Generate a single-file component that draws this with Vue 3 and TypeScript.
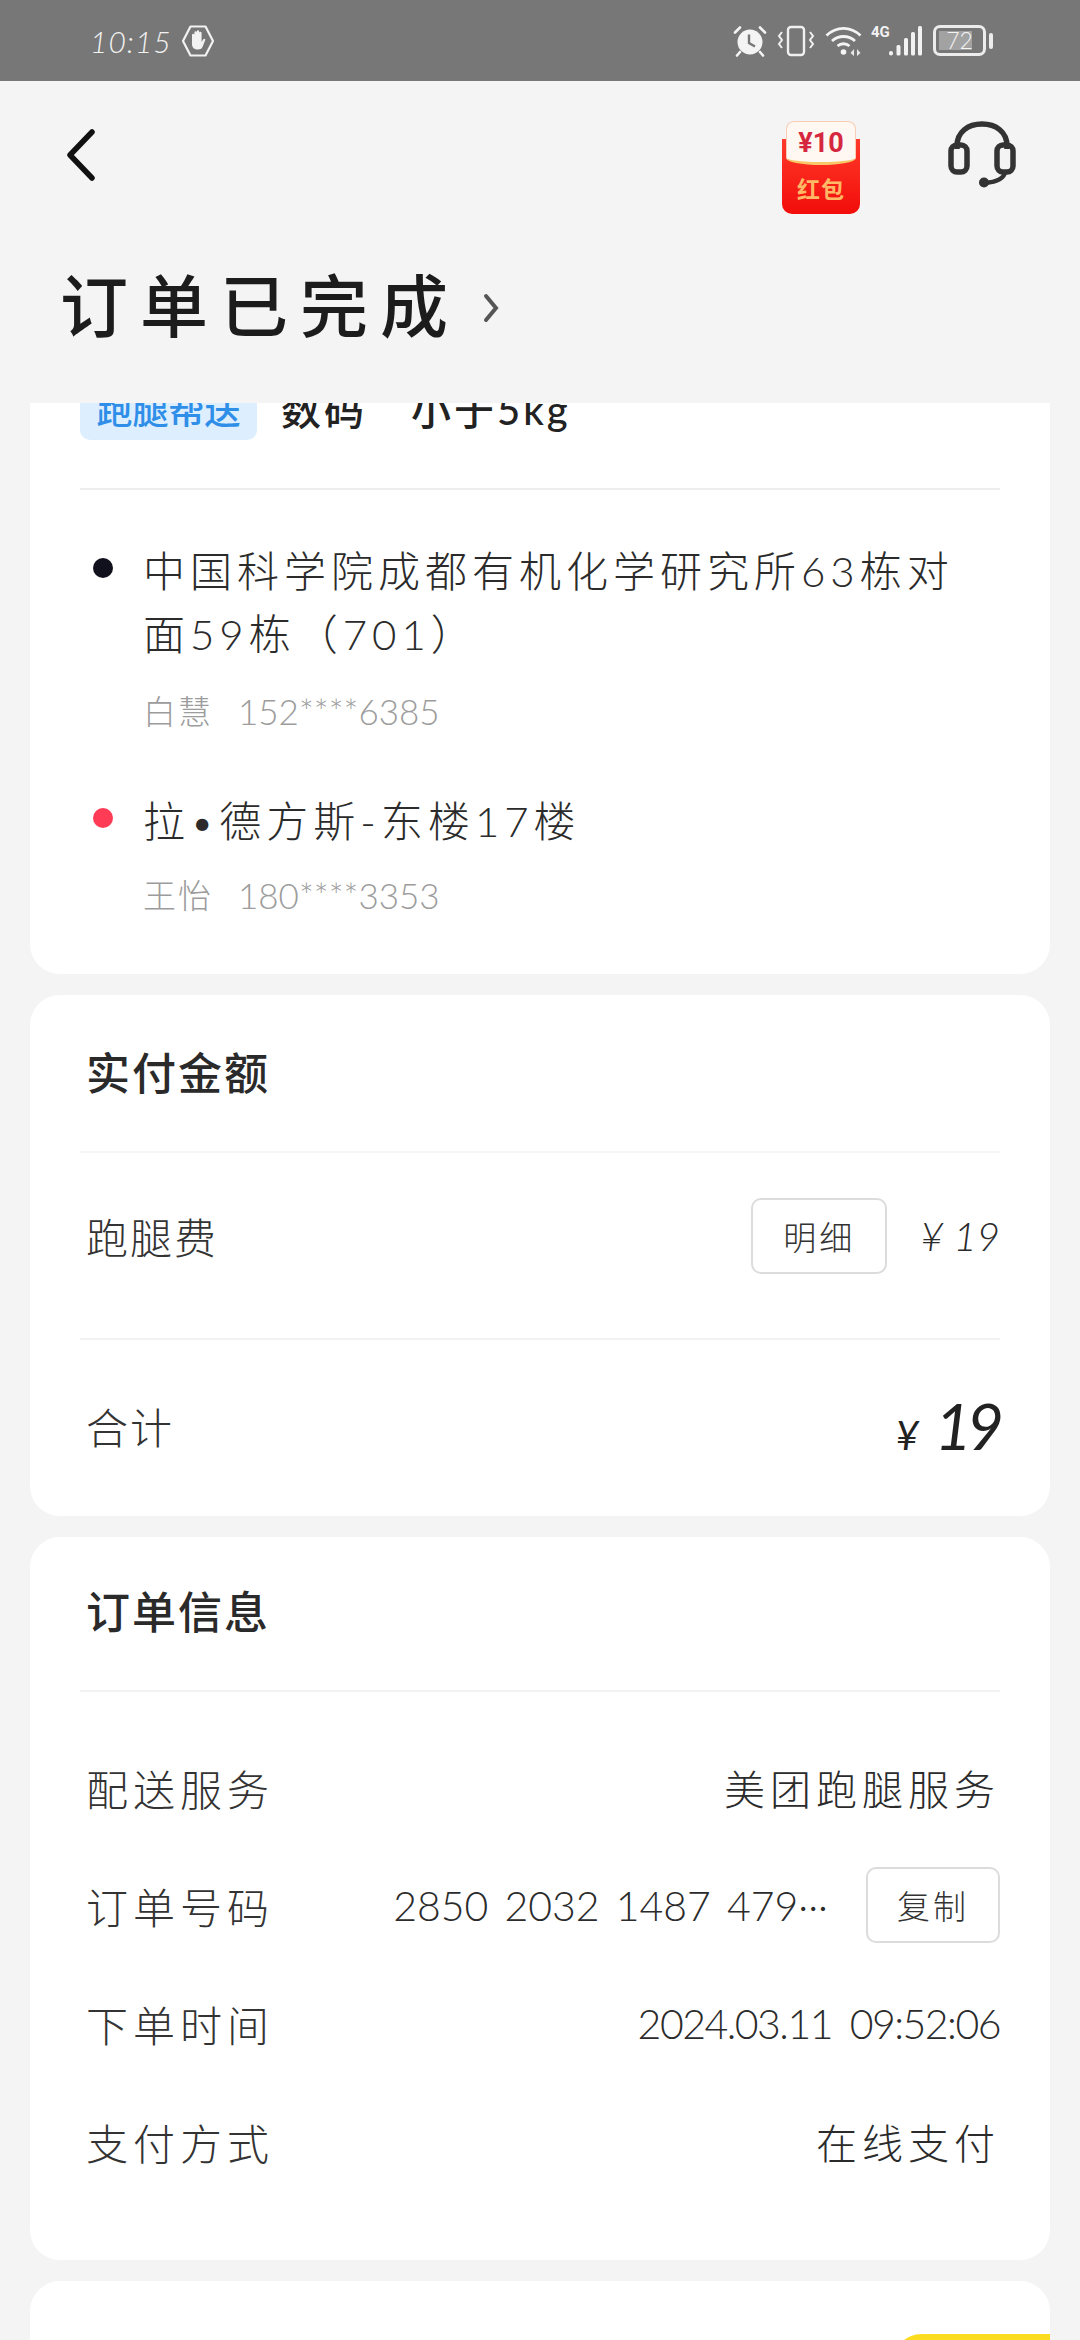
<template>
  <div class="page">
    <div class="status-bar">
      <div class="status-left">
        <span class="clock">10:15</span>
        <svg class="hand" width="34" height="34" viewBox="0 0 34 34">
          <path d="M9.500 2.500h15L32 17l-7.500 14.500h-15L2 17z" fill="none" stroke="#f2f2f2" stroke-width="2.200" stroke-linejoin="round" />
          <path d="M11 17v-6a1.200 1.200 0 0 1 2.400 0v4V8.500a1.200 1.200 0 0 1 2.400 0V15V7.500a1.200 1.200 0 0 1 2.400 0V15V9a1.200 1.200 0 0 1 2.400 0v9l1.500-2.500c1.200-1.500 2.800-.5 2 1L21.500 23c-1 1.800-2.300 2.500-4.500 2.500-3.500 0-6-2-6-5z" fill="#f2f2f2" />
        </svg>
      </div>
      <div class="status-right">
        <svg width="34" height="32" viewBox="0 0 34 32">
          <circle cx="17" cy="17" r="12.500" fill="#f4f4f4" />
          <path d="M16 9.500V18l6 3.500" fill="none" stroke="#777" stroke-width="2.400" />
          <path d="M2 7.500 7 2.500M32 7.500 27 2.500M7 27l-3 3.500M27 27l3 3.500" stroke="#f4f4f4" stroke-width="2.600" stroke-linecap="round" />
        </svg>
        <svg width="38" height="32" viewBox="0 0 38 32">
          <rect x="11" y="2" width="16" height="28" rx="3" fill="none" stroke="#f0f0f0" stroke-width="2.400" />
          <path d="M5 7 2 11l3 4-3 4 3 4M33 7l3 4-3 4 3 4-3 4" fill="none" stroke="#f0f0f0" stroke-width="2" />
        </svg>
        <svg width="38" height="32" viewBox="0 0 38 32">
          <path d="M1.500 10.500C11.500 1 25.500 1 35.500 10.500M7 16c6.500-6 16.500-6 23 0M12.500 21c3.500-3 8.500-3 12 0" fill="none" stroke="#f4f4f4" stroke-width="2.800" />
          <circle cx="18.500" cy="27" r="2.800" fill="#f4f4f4" />
          <path d="M29 24v7l-3.500-3zM32 24v7l3.500-3z" fill="#e8e8e8" />
        </svg>
        <div class="signal">
          <span class="net">4G</span>
          <svg width="33" height="31" viewBox="0 0 33 31">
            <rect x="0" y="26" width="4" height="4.500" rx="2" fill="#f2f2f2" />
            <rect x="7.500" y="20" width="4" height="10.500" rx="1.500" fill="#f2f2f2" />
            <rect x="15" y="13" width="4" height="17.500" rx="1.500" fill="#f2f2f2" />
            <rect x="22" y="7" width="4" height="23.500" rx="1.500" fill="#f2f2f2" />
            <rect x="29" y="1" width="4" height="29.500" rx="1.500" fill="#f2f2f2" />
          </svg>
        </div>
        <div class="battery">
          <div class="battery-body"><span class="battery-fill"></span><span class="battery-num">72</span></div>
          <span class="battery-cap"></span>
        </div>
      </div>
    </div>

    <header class="nav">
      <svg width="30" height="52" viewBox="0 0 30 52">
        <path d="M26 3 4 26l22 23" fill="none" stroke="#111" stroke-width="5.500" stroke-linecap="round" stroke-linejoin="round" />
      </svg>
      <div class="nav-right">
        <div class="packet">
          <div class="packet-note">¥10</div>
          <div class="packet-label">红包</div>
        </div>
        <svg width="68" height="68" viewBox="0 0 68 68">
          <path d="M9 28V25C9 11 20 3 34 3s25 8 25 22v3" fill="none" stroke="#333" stroke-width="5.500" />
          <rect x="3" y="24" width="16" height="27" rx="6" fill="none" stroke="#333" stroke-width="5.500" />
          <rect x="49" y="24" width="16" height="27" rx="6" fill="none" stroke="#333" stroke-width="5.500" />
          <path d="M57 51c-1 7-9 10-20 11" fill="none" stroke="#333" stroke-width="4.500" />
          <circle cx="36" cy="61.500" r="5" fill="#333" />
        </svg>
      </div>
    </header>

    <div class="page-title">
      <h1>订单已完成</h1>
      <svg width="18" height="30" viewBox="0 0 18 30">
        <path d="M4 3l10 12L4 27" fill="none" stroke="#555" stroke-width="4" stroke-linecap="round" />
      </svg>
    </div>

    <main class="scroller">
      <section class="card route-card">
        <div class="goods">
          <span class="tag">跑腿帮送</span>
          <span class="goods-text">数码</span>
          <span class="goods-text">小于5kg</span>
        </div>
        <div class="stop">
          <i class="dot dot-start"></i>
          <div class="stop-body">
            <div class="addr">中国科学院成都有机化学研究所63栋对面59栋（701）</div>
            <div class="contact"><span class="contact-name">白慧</span><span>152****6385</span></div>
          </div>
        </div>
        <div class="stop stop-end">
          <i class="dot dot-end"></i>
          <div class="stop-body">
            <div class="addr">拉•德方斯-东楼17楼</div>
            <div class="contact"><span class="contact-name">王怡</span><span>180****3353</span></div>
          </div>
        </div>
      </section>

      <section class="card pay-card">
        <h2>实付金额</h2>
        <div class="fee-row">
          <span class="label">跑腿费</span>
          <div class="fee-right">
            <button class="mini-btn">明细</button>
            <span class="fee">¥ 19</span>
          </div>
        </div>
        <div class="total-row">
          <span class="label">合计</span>
          <span class="total"><small>¥</small><b>19</b></span>
        </div>
      </section>

      <section class="card info-card">
        <h2>订单信息</h2>
        <div class="info-list">
          <div v-for="row in infoRows" :key="row.label" class="info-row">
            <span class="label spaced">{{ row.label }}</span>
            <div class="info-value">
              <span :class="row.kind">{{ row.value }}</span>
              <button v-if="row.copy" class="mini-btn copy-btn">复制</button>
            </div>
          </div>
        </div>
      </section>

      <section class="card last-card">
        <span class="yellow-btn"></span>
      </section>
    </main>
  </div>
</template>

<script setup lang="ts">
type InfoRow = {
  label: string
  value: string
  kind: 'spaced' | 'number' | 'date'
  copy?: boolean
}

const infoRows: InfoRow[] = [
  { label: '配送服务', value: '美团跑腿服务', kind: 'spaced' },
  { label: '订单号码', value: '2850 2032 1487 479···', kind: 'number', copy: true },
  { label: '下单时间', value: '2024.03.11 09:52:06', kind: 'date' },
  { label: '支付方式', value: '在线支付', kind: 'spaced' },
]
</script>

<style>
html, body { margin: 0; background: #f4f4f4; }
</style>

<style scoped>
.page {
  width: 1080px;
  height: 2340px;
  overflow: hidden;
  display: flex;
  flex-direction: column;
  background: #f4f4f4;
  color: #222;
  font-family: "Lato", "Noto Sans CJK SC", sans-serif;
  font-weight: 300;
}

.status-bar {
  height: 81px;
  flex: none;
  background: #777;
  display: flex;
  align-items: center;
  justify-content: space-between;
  padding: 0 87px 0 90px;
  box-sizing: border-box;
  color: #f2f2f2;
}
.status-left { display: flex; align-items: center; gap: 9px; }
.clock { font-size: 30px; font-style: italic; letter-spacing: 1px; }
.status-right { display: flex; align-items: center; gap: 10px; }
.signal { position: relative; margin-left: 16px; }
.signal svg { display: block; }
.net {
  position: absolute;
  left: -18px;
  top: -2px;
  font-size: 15px;
  font-weight: 700;
  font-family: "Roboto", sans-serif;
}
.battery { display: flex; align-items: center; gap: 3px; margin-left: 1px; }
.battery-body {
  position: relative;
  width: 53px;
  height: 31px;
  box-sizing: border-box;
  border: 3px solid #ececec;
  border-radius: 7px;
  overflow: hidden;
}
.battery-fill { position: absolute; left: 3px; top: 3px; bottom: 3px; width: 33px; background: #a2a2a2; }
.battery-num {
  position: absolute;
  inset: 0;
  text-align: center;
  font-size: 23px;
  line-height: 25px;
  color: #f4f4f4;
}
.battery-cap { width: 4px; height: 16px; border-radius: 2px; background: #ececec; }

.nav {
  flex: none;
  height: 152px;
  display: flex;
  justify-content: space-between;
  align-items: flex-start;
  padding: 40px 64px 0 66px;
  box-sizing: border-box;
}
.nav > svg { margin-top: 8px; }
.nav-right { display: flex; align-items: flex-start; gap: 88px; }
.packet {
  width: 78px;
  height: 93px;
  border-radius: 10px;
  background: linear-gradient(transparent 18px, #ff3a2a 18px, #f20d0a);
  display: flex;
  flex-direction: column;
  align-items: center;
  overflow: hidden;
}
.packet-note {
  width: 70px;
  height: 44px;
  box-sizing: border-box;
  border-radius: 8px 8px 35px 35px / 8px 8px 7px 7px;
  background: #fff8f2;
  border: 1px solid #f6cdb4;
  border-bottom: 3px solid #f8c868;
  color: #d5283f;
  font: 700 27px/42px "Roboto", sans-serif;
  text-align: center;
}
.packet-label {
  font: 700 23px/46px "Noto Sans CJK SC", sans-serif;
  color: #ffb866;
  letter-spacing: 1px;
}

.page-title {
  flex: none;
  height: 170px;
  padding: 28px 0 0 60px;
  box-sizing: border-box;
  display: flex;
  align-items: flex-start;
  gap: 22px;
}
.page-title h1 {
  margin: 0;
  font-size: 68px;
  line-height: 90px;
  font-weight: 500;
  letter-spacing: 12px;
  color: #1c1c1c;
}
.page-title svg { margin-top: 32px; }

.scroller {
  flex: 1;
  min-height: 0;
  overflow: hidden;
  padding: 0 30px;
  display: flex;
  flex-direction: column;
  gap: 21px;
}

.card {
  flex: none;
  background: #fff;
  border-radius: 30px;
  box-sizing: border-box;
}
.card h2 {
  margin: 0;
  font-size: 44px;
  font-weight: 500;
  letter-spacing: 2px;
  color: #2a2a2a;
}

/* the first card is scrolled under the title, so only its lower part shows */
.route-card {
  height: 571px;
  padding: 0 50px;
  border-radius: 0 0 30px 30px;
}
.goods {
  height: 107px;
  margin-top: -22px;
  display: flex;
  align-items: flex-start;
  border-bottom: 2px solid #eee;
  gap: 24px;
}
.tag {
  width: 177px;
  height: 59px;
  border-radius: 10px;
  background: #ddeeff;
  color: #2f8fe8;
  font-size: 36px;
  font-weight: 500;
  line-height: 59px;
  text-align: center;
}
.goods-text {
  font-size: 40px;
  line-height: 59px;
  font-weight: 500;
  letter-spacing: 3px;
  margin-right: 20px;
}
.stop {
  display: flex;
  align-items: flex-start;
  gap: 30px;
  padding: 50px 0 0 13px;
}
.stop-end { padding-top: 54px; }
.stop-end .contact { margin-top: 17px; }
.dot { flex: none; width: 20px; height: 20px; border-radius: 50%; margin-top: 18px; }
.dot-start { background: #11111d; }
.dot-end { background: #ff3b55; }
.addr {
  font-size: 42px;
  line-height: 63px;
  letter-spacing: 5px;
  color: #2b2b2b;
}
.contact {
  display: flex;
  gap: 25px;
  font-size: 35px;
  line-height: 50px;
  margin-top: 20px;
  color: #9c9c9c;
}
.contact-name { letter-spacing: 2px; font-size: 33px; }

.pay-card {
  height: 521px;
  padding: 0 50px;
}
.pay-card h2 {
  height: 156px;
  line-height: 156px;
  padding-left: 6px;
  border-bottom: 2px solid #f6f6f6;
}
.fee-row {
  height: 165px;
  display: flex;
  align-items: center;
  justify-content: space-between;
  border-bottom: 2px solid #f2f2f2;
  padding: 0 0 20px 6px;
}
.fee-right { display: flex; align-items: center; gap: 33px; }
.label { font-size: 42px; letter-spacing: 2px; color: #333; }
.fee { font-size: 40px; font-style: italic; color: #2b2b2b; }
.total-row {
  height: 170px;
  display: flex;
  align-items: center;
  justify-content: space-between;
  padding: 0 1px 6px 6px;
}
.total { display: flex; align-items: baseline; gap: 16px; font-style: italic; color: #222; }
.total small { font-size: 40px; font-weight: 400; }
.total b { font-size: 64px; font-weight: 400; letter-spacing: -5px; }
.mini-btn {
  width: 136px;
  height: 76px;
  padding: 0;
  border: 2px solid #dcdcdc;
  border-radius: 10px;
  background: #fff;
  font: inherit;
  font-size: 33px;
  letter-spacing: 3px;
  color: #333;
}

.info-card {
  height: 723px;
  padding: 0 50px;
}
.info-card h2 {
  height: 153px;
  line-height: 150px;
  padding-left: 6px;
  border-bottom: 2px solid #f2f2f2;
}
.info-list { display: flex; flex-direction: column; padding-top: 36px; }
.info-row {
  height: 118px;
  display: flex;
  align-items: center;
  justify-content: space-between;
  padding: 0 0 0 6px;
}
.info-value {
  display: flex;
  align-items: center;
  gap: 38px;
  font-size: 41px;
  color: #2b2b2b;
}
.spaced { letter-spacing: 5px; }
.number { word-spacing: 5px; }
.date { letter-spacing: -1.5px; word-spacing: 8px; }
.copy-btn { width: 134px; }

.last-card {
  height: 100px;
  position: relative;
  overflow: hidden;
}
.yellow-btn {
  position: absolute;
  top: 53px;
  right: 0;
  width: 158px;
  height: 60px;
  border-radius: 30px 0 0 0;
  background: #fbdc1e;
}
</style>
